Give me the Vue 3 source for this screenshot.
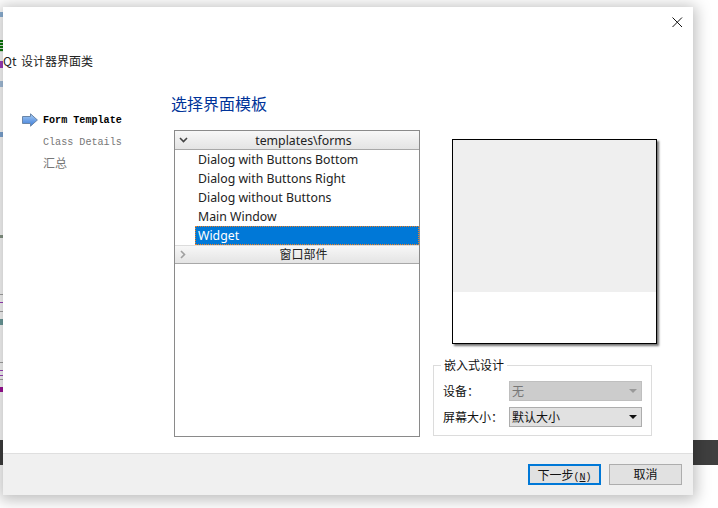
<script setup>
const templates = ['Dialog with Buttons Bottom', 'Dialog with Buttons Right', 'Dialog without Buttons', 'Main Window']
const green = 'repeating-linear-gradient(#0a7a0a 0 2px, #d8e8d8 2px 3px)'
const marks = [
  { top: 12, height: 5, color: '#8fb4d8' },
  { top: 40, height: 12, color: green },
  { top: 61, height: 7, color: '#a040c0' },
  { top: 81, height: 6, color: '#a8c4e0' },
  { top: 132, height: 5, color: '#7fa8d8' },
  { top: 235, height: 3, color: '#8a9a8a' },
  { top: 294, height: 1, color: '#a8a8a8' },
  { top: 302, height: 1, color: '#a040c0' },
  { top: 311, height: 1, color: '#a8a8a8' },
  { top: 319, height: 6, color: '#6f9f9f' },
  { top: 362, height: 1, color: '#a8a8a8' },
  { top: 370, height: 1, color: '#a040c0' },
  { top: 375, height: 1, color: '#a040c0' },
  { top: 379, height: 1, color: '#a8a8a8' },
  { top: 387, height: 5, color: '#a0109a' }
]
</script>

<template>
  <div class="desktop">
    <i v-for="m in marks" :key="m.top" class="mark" :style="{ top: m.top + 'px', height: m.height + 'px', background: m.color }"></i>
    <div class="darkbar"></div>
    <section class="dialog">
      <div class="close">
        <svg width="11" height="11" viewBox="0 0 11 11"><path d="M.5.5l9.5 9.5M10 .5L.5 10" stroke="#111" fill="none" /></svg>
      </div>
      <div class="app-title">Qt 设计器界面类</div>
      <div class="body">
        <nav class="steps">
          <div class="step active">
            <svg class="arrow" width="16" height="14" viewBox="0 0 16 14">
              <defs><linearGradient id="arr" x1="0" y1="0" x2="0" y2="1"><stop offset="0" stop-color="#a8cdf5" /><stop offset="1" stop-color="#3b7bd8" /></linearGradient></defs>
              <path d="M.5 3.5h8V.8L15.4 7 8.5 13.2v-2.7h-8z" fill="url(#arr)" stroke="#6a86a8" />
            </svg>
            <span>Form Template</span>
          </div>
          <div class="step"><span>Class Details</span></div>
          <div class="step"><span class="cjk">汇总</span></div>
        </nav>
        <div class="main">
          <h1>选择界面模板</h1>
          <div class="columns">
            <div class="tree">
              <div class="group first">
                <svg class="chev" width="9" height="6" viewBox="0 0 9 6"><path d="M1 1l3.5 3.5L8 1" stroke="#444" stroke-width="1.6" fill="none" /></svg>
                templates\forms
              </div>
              <div v-for="t in templates" :key="t" class="item">{{ t }}</div>
              <div class="item selected">Widget</div>
              <div class="group">
                <svg class="chev" width="6" height="9" viewBox="0 0 6 9"><path d="M1 1l3.5 3.5L1 8" stroke="#a0a0a0" stroke-width="1.6" fill="none" /></svg>
                <span class="group-cjk">窗口部件</span>
              </div>
            </div>
            <div class="side">
              <div class="preview"><div class="preview-top"></div></div>
              <fieldset class="embed">
                <legend>嵌入式设计</legend>
                <div class="row">
                  <label>设备：</label>
                  <div class="combo disabled"><span>无</span><i class="caret"></i></div>
                </div>
                <div class="row">
                  <label>屏幕大小：</label>
                  <div class="combo"><span>默认大小</span><i class="caret"></i></div>
                </div>
              </fieldset>
            </div>
          </div>
        </div>
      </div>
      <footer class="footer">
        <button class="btn primary"><span class="lift">下一步<span class="mono">(<u>N</u>)</span></span></button>
        <button class="btn"><span class="lift">取消</span></button>
      </footer>
    </section>
  </div>
</template>

<style>
html, body { margin: 0; background: #fff; overflow: hidden; }
</style>

<style scoped>
.desktop {
  position: relative;
  width: 718px;
  height: 508px;
  overflow: hidden;
  background: #fff;
  font-family: "Noto Sans CJK SC", "Liberation Sans", sans-serif;
}
.mark { position: absolute; left: 0; width: 3px; }
.darkbar { position: absolute; left: 0; right: 0; top: 440px; height: 25px; background: #3f3f3f; }
.dialog {
  position: absolute;
  left: 3px;
  top: 7px;
  width: 690px;
  height: 488px;
  background: #fff;
  box-shadow: 0 2px 14px 3px rgba(0, 0, 0, .26);
  display: flex;
  flex-direction: column;
  color: #111;
}
.close { position: absolute; top: 10px; right: 10px; width: 11px; height: 11px; line-height: 0; }
.app-title { margin-top: 45px; height: 17px; font-size: 12px; line-height: 17px; word-spacing: 2px; color: #222; }
.body { flex: 1; display: flex; min-height: 0; }
.steps { width: 168px; padding: 40px 0 0 19px; box-sizing: border-box; flex: none; }
.step {
  display: flex;
  align-items: center;
  height: 22px;
  padding-left: 21px;
  color: #777;
  position: relative;
}
.step span { font-family: "Liberation Mono", "Noto Sans CJK SC", monospace; font-size: 10.1px; }
.step span.cjk { font-family: "Noto Sans CJK SC", sans-serif; font-size: 12px; padding-bottom: 4px; }
.step.active { color: #000; font-weight: 700; }
.arrow { position: absolute; left: 0; top: 4px; }
.main { flex: 1; padding-top: 23px; min-width: 0; }
h1 { margin: 0; font-size: 16px; font-weight: 400; line-height: 23px; color: #003399; }
.columns { display: flex; margin-top: 15px; padding-left: 3px; }
.tree {
  width: 244px;
  height: 305px;
  border: 1px solid #8a8a8a;
  background: #fff;
  font-family: "Noto Sans", "Noto Sans CJK SC", sans-serif;
  font-size: 12.3px;
  flex: none;
}
.group {
  position: relative;
  height: 17px;
  line-height: 17px;
  padding-left: 13px;
  text-align: center;
  background: linear-gradient(#f7f7f7, #e4e4e4);
  border-top: 1px solid #dcdcdc;
  border-bottom: 1px solid #a8a8a8;
  color: #222;
}
.group.first { height: 18px; line-height: 20px; border-top: 0; }
.group-cjk { font-size: 12px; }
.chev { position: absolute; left: 4px; top: 6px; }
.group:not(.first) .chev { left: 5px; top: 4px; }
.item { height: 19px; line-height: 19px; padding-left: 23px; color: #222; }
.selected {
  margin-left: 20px;
  padding-left: 2px;
  box-sizing: border-box;
  line-height: 17px;
  background: #0078d7;
  color: #fff;
  border: 1px dotted #f08020;
}
.side { margin-left: 32px; width: 205px; }
.preview {
  margin-top: 9px;
  width: 203px;
  height: 203px;
  border: 1px solid #000;
  box-shadow: 2px 2px 2px rgba(0, 0, 0, .55);
  background: #fff;
}
.preview-top { height: 152px; background: #efefef; }
.embed {
  margin: 14px 0 0 -19px;
  padding: 6px 9px 0;
  width: 219px;
  height: 78px;
  box-sizing: border-box;
  border: 1px solid #dcdcdc;
  font-size: 12px;
}
legend { padding: 0 3px; font-size: 12px; line-height: 14px; margin-left: -2px; }
.row { display: flex; align-items: center; height: 26px; }
label { width: 66px; flex: none; font-size: 12px; padding-bottom: 2px; }
.combo {
  flex: 1;
  height: 20px;
  box-sizing: border-box;
  border: 1px solid #adadad;
  background: #e1e1e1;
  display: flex;
  align-items: center;
  justify-content: space-between;
  padding: 0 4px 0 2px;
  font-size: 12px;
}
.combo span { padding-bottom: 2px; }
.combo.disabled { background: #cccccc; border-color: #bfbfbf; color: #777; }
.caret { width: 0; height: 0; border: 4px solid transparent; border-top: 4px solid #111; border-bottom: 0; }
.disabled .caret { border-top-color: #999; }
.footer {
  height: 41px;
  background: #f0f0f0;
  border-top: 1px solid #dfdfdf;
  display: flex;
  justify-content: flex-end;
  align-items: center;
  gap: 8px;
  padding-right: 11px;
  flex: none;
}
.btn {
  width: 73px;
  height: 21px;
  box-sizing: border-box;
  border: 1px solid #adadad;
  background: #e1e1e1;
  padding: 0 0 2px;
  font: 12px "Noto Sans CJK SC", sans-serif;
  color: #111;
}
.btn.primary { border: 2px solid #0078d7; }
.mono { font-family: "Liberation Mono", monospace; font-size: 10px; }
</style>
